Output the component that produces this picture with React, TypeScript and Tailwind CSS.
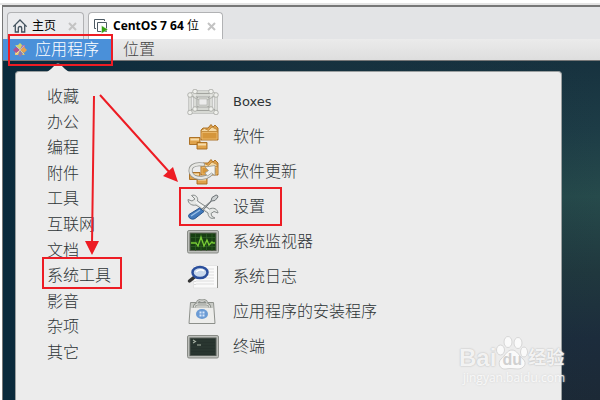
import type { ReactNode } from "react";

const categories = ["收藏", "办公", "编程", "附件", "工具", "互联网", "文档", "系统工具", "影音", "杂项", "其它"];

function HomeIcon() {
  return (
    <svg width="16" height="16" viewBox="0 0 16 16" fill="none" stroke="#43535f" strokeWidth="1.3" aria-hidden="true">
      <path d="M1.3 8.6 8 2l6.700 6.600M3.300 7v7h3V10q0-1.500 1.700-1.500T9.700 10v4h3V7" />
    </svg>
  );
}

function MachineIcon() {
  return (
    <svg width="16" height="16" viewBox="0 0 16 16" fill="none" stroke="#4d5a64" aria-hidden="true">
      <path d="M3 10.500H1.500v-9h10V3" />
      <path d="M4.500 4.500h9v9h-9z" fill="#fff" />
      <path d="m8.500 7.500 6.500 4-6.500 4z" fill="#35a010" stroke="#fff" strokeWidth=".5" />
    </svg>
  );
}

function CloseIcon() {
  return (
    <svg width="9" height="9" viewBox="0 0 9 9" stroke="#c3c3c3" strokeWidth="2" aria-hidden="true">
      <path d="m1 1 7 7M8 1 1 8" />
    </svg>
  );
}

function CentosIcon() {
  return (
    <svg width="14" height="14" viewBox="0 0 14 14" aria-hidden="true">
      <path d="M2 2h4.500v4.500z" fill="#b9cf8a" />
      <path d="M4 3 7 0l3 3-3 4z" fill="#d3d56c" />
      <path d="M12 2v4.500L7 7l2-5z" fill="#a57fb4" />
      <path d="m11 4 3 3-3 3-4-3z" fill="#e6a24c" />
      <path d="M12 12H7.500V7z" fill="#d9c863" />
      <path d="M10 11 7 14l-3-3 3-4z" fill="#8a7cb6" />
      <path d="M2 12V7.500L7 7l-2 5z" fill="#ecc874" />
      <path d="M3 10 0 7l3-3 4 3z" fill="#b0508f" />
      <path d="m3 3 8 8M11 3l-8 8" stroke="#fff" strokeOpacity=".6" strokeWidth=".6" />
    </svg>
  );
}

function BoxesIcon() {
  const nodes = [[3, 6], [8, 2.500], [24, 2.500], [29, 6], [3, 23.500], [8, 20], [24, 20], [29, 23.500]];
  return (
    <svg width="32" height="26" viewBox="0 0 32 26" fill="none" aria-hidden="true">
      <g stroke="#a2a49f" strokeWidth="3">
        <path d="M3 6h26v17H3zM8 3h16v17H8zM3 6l5-3M29 6l-5-3M3 23l5-3M29 23l-5-3" />
        <path d="M11 9h10v8H11z" strokeWidth="2.500" />
      </g>
      <g stroke="#e9eae6" strokeWidth="1.600">
        <path d="M3 6h26v17H3zM8 3h16v17H8zM3 6l5-3M29 6l-5-3M3 23l5-3M29 23l-5-3" />
        <path d="M11 9h10v8H11z" strokeWidth="1" />
      </g>
      <path d="m4 7 8 4M28 7l-8 4M4 22l8-5M28 22l-8-5" stroke="#b0b2ad" />
      {nodes.map(([x, y]) => (
        <circle key={`${x}-${y}`} cx={x} cy={y} r="2.300" fill="#eff0ec" stroke="#a4a6a1" strokeWidth=".8" />
      ))}
    </svg>
  );
}

function Cartons() {
  return (
    <g stroke="#a66a1b" strokeWidth=".9">
      <path d="M14 6 16 4h5l3-3.500 2 2.500 2-2 3 3v12H14z" fill="#dda04c" />
      <path d="m14.500 6 3-1.500 4 2L25 3l5 2.500v2H14.500z" fill="#f5d9a4" stroke="#c08a3c" />
      <path d="M15 8.500h15V15H15z" fill="#d5963b" stroke="#ecba6c" />
      <path d="M2.500 13.500h10.500v7H2.500z" fill="#dfa24a" />
      <path d="M3.500 14.500h8.500v2H3.500z" fill="#f6dcab" stroke="none" />
      <path d="M10 18.500h10v6.500H10z" fill="#dfa24a" />
      <path d="M11 19.500h8v2h-8z" fill="#f6dcab" stroke="none" />
    </g>
  );
}

function SoftwareIcon() {
  return (
    <svg width="32" height="26" viewBox="0 0 32 26" aria-hidden="true">
      <Cartons />
    </svg>
  );
}

function UpdateIcon() {
  return (
    <svg width="32" height="26" viewBox="0 0 32 26" aria-hidden="true">
      <Cartons />
      <g fill="none" strokeLinecap="round">
        <path d="M16 5.500C7 4 2 8 4 14c3 7 19 7 22-3" stroke="#8f918d" strokeWidth="4" />
        <path d="M16 5.500C7 4 2 8 4 14c3 7 19 7 22-3" stroke="#e7e7e3" strokeWidth="2.500" />
      </g>
      <path d="m18 8 10-1.500v10l-3.500-2.500-4 3-2.500-3 3.500-2.500z" fill="#f2f2ef" stroke="#979994" strokeWidth=".8" />
    </svg>
  );
}

function SettingsIcon() {
  return (
    <svg width="32" height="26" viewBox="0 0 32 26" strokeLinejoin="round" aria-hidden="true">
      <path
        d="M4.500 1.500c4-1.500 7 2 6 5.500l12 8c4-2 8 0 8.500 4l-4-1.500-3 2 1 3 3 1.500c-4 1.500-7-1-7-5l-12-8C5 12 1 9.500 1 5.500l4 1.500 3-2z"
        fill="#e5e7e5"
        stroke="#858a89"
      />
      <path d="m9 8 13 9" stroke="#fff" />
      <path d="M14 16 24 7l1-3.500 4-2.500q2 0 2 2l-3 3.500-3.500.5L15 17.500z" fill="#cdd1d2" stroke="#6d7376" />
      <path d="m12.500 14 4.500 3.500-9 7c-3 2-8-1-6-4z" fill="#4279ba" stroke="#28568f" />
      <path d="m13 16-9 6" stroke="#9cc2e8" strokeWidth="1.300" />
    </svg>
  );
}

function MonitorIcon() {
  return (
    <svg width="32" height="24" viewBox="0 0 32 24" fill="none" aria-hidden="true">
      <rect x=".5" y=".5" width="31" height="22.500" rx="1.500" fill="#bcbeba" stroke="#888b86" />
      <rect x="3" y="3" width="26" height="17.500" fill="#173f12" stroke="#5c6357" />
      <path d="M3 7.500h26M3 12h26M3 16.500h26M8.500 3v18M14 3v18M19.500 3v18M25 3v18" stroke="#31602a" strokeWidth=".7" />
      <path d="M4 13h5l2 3 3-9 3 9 3-6 2 5 3-3 1 1h2" stroke="#78cc35" strokeWidth="1.300" />
    </svg>
  );
}

function LogIcon() {
  return (
    <svg width="32" height="25" viewBox="0 0 32 25" fill="none" aria-hidden="true">
      <path d="M6.500 1.500h24V24h-24z" fill="#fafafa" stroke="#e4e4e4" />
      <path d="M30.500 2v22" stroke="#92928e" />
      <path d="M9 5h18M9 8h18M9 11h18M9 14h18M9 17h18M9 20h18" stroke="#dedede" />
      <path d="M8 5v17" stroke="#bbb" strokeDasharray="1 2" />
      <path d="m7.500 13-5 4" stroke="#333" strokeWidth="3.500" strokeLinecap="round" />
      <ellipse cx="13" cy="8.500" rx="7.500" ry="5.500" fill="#c7d7ec" fillOpacity=".9" stroke="#2b4f9c" strokeWidth="2.500" />
      <path d="M9 8q4-4 8-1" stroke="#fff" strokeWidth="1.500" />
    </svg>
  );
}

function InstallerIcon() {
  return (
    <svg width="32" height="26" viewBox="0 0 32 26" fill="none" aria-hidden="true">
      <path d="M3.500 3.500h23l1.500 21H2z" fill="#ededeb" stroke="#8d908b" />
      <path d="M4 4h22v5H4z" fill="#c9cbc6" />
      <path d="M7 9q0-4 4-4h8q4 0 4 4M10 5q0-4 5-4t5 4" stroke="#8c908a" strokeWidth="2.500" />
      <path d="M7 9q0-4 4-4h8q4 0 4 4M10 5q0-4 5-4t5 4" stroke="#dddeda" />
      <ellipse cx="15" cy="15" rx="6" ry="5" fill="#6b9bd4" />
      <path d="M12.500 12.500h2v2h-2zm3 0h2v2h-2zm-3 3h2v2h-2zm3 0h2v2h-2z" fill="#d8e7fb" />
    </svg>
  );
}

function TerminalIcon() {
  return (
    <svg width="32" height="24" viewBox="0 0 32 24" fill="none" aria-hidden="true">
      <rect x=".5" y=".5" width="31" height="22.500" rx="1.500" fill="#bcbeba" stroke="#888b86" />
      <rect x="3" y="3" width="26" height="17.500" fill="#26322d" stroke="#555d57" />
      <path d="M4 6h24M4 9h24M4 12h24M4 15h24M4 18h24" stroke="#34413a" strokeWidth=".6" />
      <path d="m6 5 2.500 1.500L6 8m4 2h4" stroke="#a9b3a6" strokeWidth="1.100" />
    </svg>
  );
}

const apps: { label: string; icon: ReactNode }[] = [
  { label: "Boxes", icon: <BoxesIcon /> },
  { label: "软件", icon: <SoftwareIcon /> },
  { label: "软件更新", icon: <UpdateIcon /> },
  { label: "设置", icon: <SettingsIcon /> },
  { label: "系统监视器", icon: <MonitorIcon /> },
  { label: "系统日志", icon: <LogIcon /> },
  { label: "应用程序的安装程序", icon: <InstallerIcon /> },
  { label: "终端", icon: <TerminalIcon /> },
];

function Tabs() {
  return (
    <div className="flex h-8 items-end gap-1 bg-[#e3e4e6] pl-1 text-xs">
      <div className="flex h-[27px] w-[77px] items-center rounded-t border border-b-0 border-[#b1b2b4] bg-[#ebecee] pl-1">
        <button className="flex items-center gap-1 whitespace-nowrap text-black">
          <HomeIcon />
          主页
        </button>
        <button aria-label="关闭主页" className="ml-3">
          <CloseIcon />
        </button>
      </div>
      <div className="flex h-[27px] w-[135px] items-center rounded-t border border-b-0 border-[#b1b2b4] bg-white pl-1">
        <button className="flex items-center gap-1 whitespace-nowrap text-black">
          <MachineIcon />
          <span>
            <b className="font-['Open_Sans'] font-bold">CentOS 7 64 </b>位
          </span>
        </button>
        <button aria-label="关闭 CentOS 7 64 位" className="ml-2">
          <CloseIcon />
        </button>
      </div>
    </div>
  );
}

function MenuBar() {
  return (
    <nav className="flex h-[22px] border-b border-[#777] bg-linear-to-b from-[#ebebeb] to-[#dedede] text-base leading-5 font-light">
      <button className="flex w-[108px] items-center gap-2 bg-[#4a90d9] pl-[10px] whitespace-nowrap text-white">
        <CentosIcon />
        应用程序
      </button>
      <button className="px-3 whitespace-nowrap text-[#444]">位置</button>
    </nav>
  );
}

function Annotations() {
  return (
    <svg className="pointer-events-none absolute top-0 left-0" width="300" height="300" fill="none" stroke="#ed1c24" strokeWidth="2" aria-hidden="true">
      <path d="M9 35h103v30H9zM43 258h78v30H43zM180 188h101v37H180zM94 96l-2 148M100 95l71 79" />
      <path d="M85 241h14l-7 14zM178 182l-15-6 10-9z" fill="#ed1c24" stroke="none" />
    </svg>
  );
}

function Watermark() {
  return (
    <div className="absolute right-[31px] bottom-[14px] w-[110px] text-white/80 [text-shadow:0_0_2px_#bbb,0_0_1px_#ccc]">
      <div className="flex h-[34px] items-end font-['Liberation_Sans','Noto_Sans_CJK_SC',sans-serif] font-bold">
        <span className="text-2xl leading-6">Bai</span>
        <span className="relative flex h-9 w-8 items-end justify-center">
          <svg className="absolute inset-0" width="32" height="36" viewBox="0 0 32 36" fill="#fafafa" stroke="#d6d6d6" aria-hidden="true">
            <ellipse cx="4.500" cy="16" rx="4" ry="5" />
            <ellipse cx="12" cy="8" rx="4" ry="5.500" />
            <ellipse cx="22" cy="9" rx="4" ry="5.500" />
            <ellipse cx="28" cy="18" rx="3.500" ry="5" />
            <path d="M16 16c5 0 7 6 11 9 5 5 0 10-5 10-4 0-8-1-12 0-6 1-9-6-5-10 4-3 6-9 11-9z" />
          </svg>
          <span className="relative text-base leading-5 text-[#d0d0d0] [text-shadow:none]">du</span>
        </span>
        <span className="text-lg leading-6 whitespace-nowrap">经验</span>
      </div>
      <p className="text-center font-['Open_Sans'] text-xs leading-4 [text-shadow:0_0_2px_#ccc]">jingyan.baidu.com</p>
    </div>
  );
}

export default function App() {
  return (
    <div className="relative flex min-h-screen flex-col overflow-hidden bg-white pt-[3px] font-['DejaVu_Sans','Noto_Sans_CJK_SC',sans-serif]">
      <div className="h-[2px] bg-[#e5e5e5]" />
      <div className="ml-[2px] flex grow flex-col border-t-2 border-l border-[#777]">
        <Tabs />
        <MenuBar />
        <main className="flex grow bg-[linear-gradient(180deg,#17323f_0%,#1d3c46_20%,#264a4b_40%,#20383e_62%,#1c2c3c_82%,#1c2936_100%)]">
          <div className="flex grow bg-linear-to-r from-[#0a2a3c] via-[#16303e]/60 to-transparent pt-[10px] pr-[38px] pl-3">
            <div className="relative flex grow rounded-t-sm border border-b-0 border-[#9a9fa0] bg-[#ececec]">
              <svg className="absolute -top-[9px] left-7" width="28" height="10" viewBox="0 0 28 10" fill="#ececec" aria-hidden="true">
                <path d="M0 10Q4 9 7 6l5-5q2-1 4 0l5 5q3 3 7 4z" />
              </svg>
              <ul className="flex h-[291px] w-[171px] flex-col justify-between pt-[15px] pl-[31px] text-base leading-5 font-light text-[#2e3436]">
                {categories.map((name) => (
                  <li key={name} className="h-5">
                    <button className="block whitespace-nowrap">{name}</button>
                  </li>
                ))}
              </ul>
              <ul className="grow pt-3 text-base font-light text-[#2e3436]">
                {apps.map((app) => (
                  <li key={app.label}>
                    <button className="flex h-[35px] items-center gap-[14px] whitespace-nowrap">
                      {app.icon}
                      <span className={app.label === "Boxes" ? "text-[13px] font-normal" : ""}>{app.label}</span>
                    </button>
                  </li>
                ))}
              </ul>
            </div>
          </div>
        </main>
      </div>
      <Annotations />
      <Watermark />
    </div>
  );
}
